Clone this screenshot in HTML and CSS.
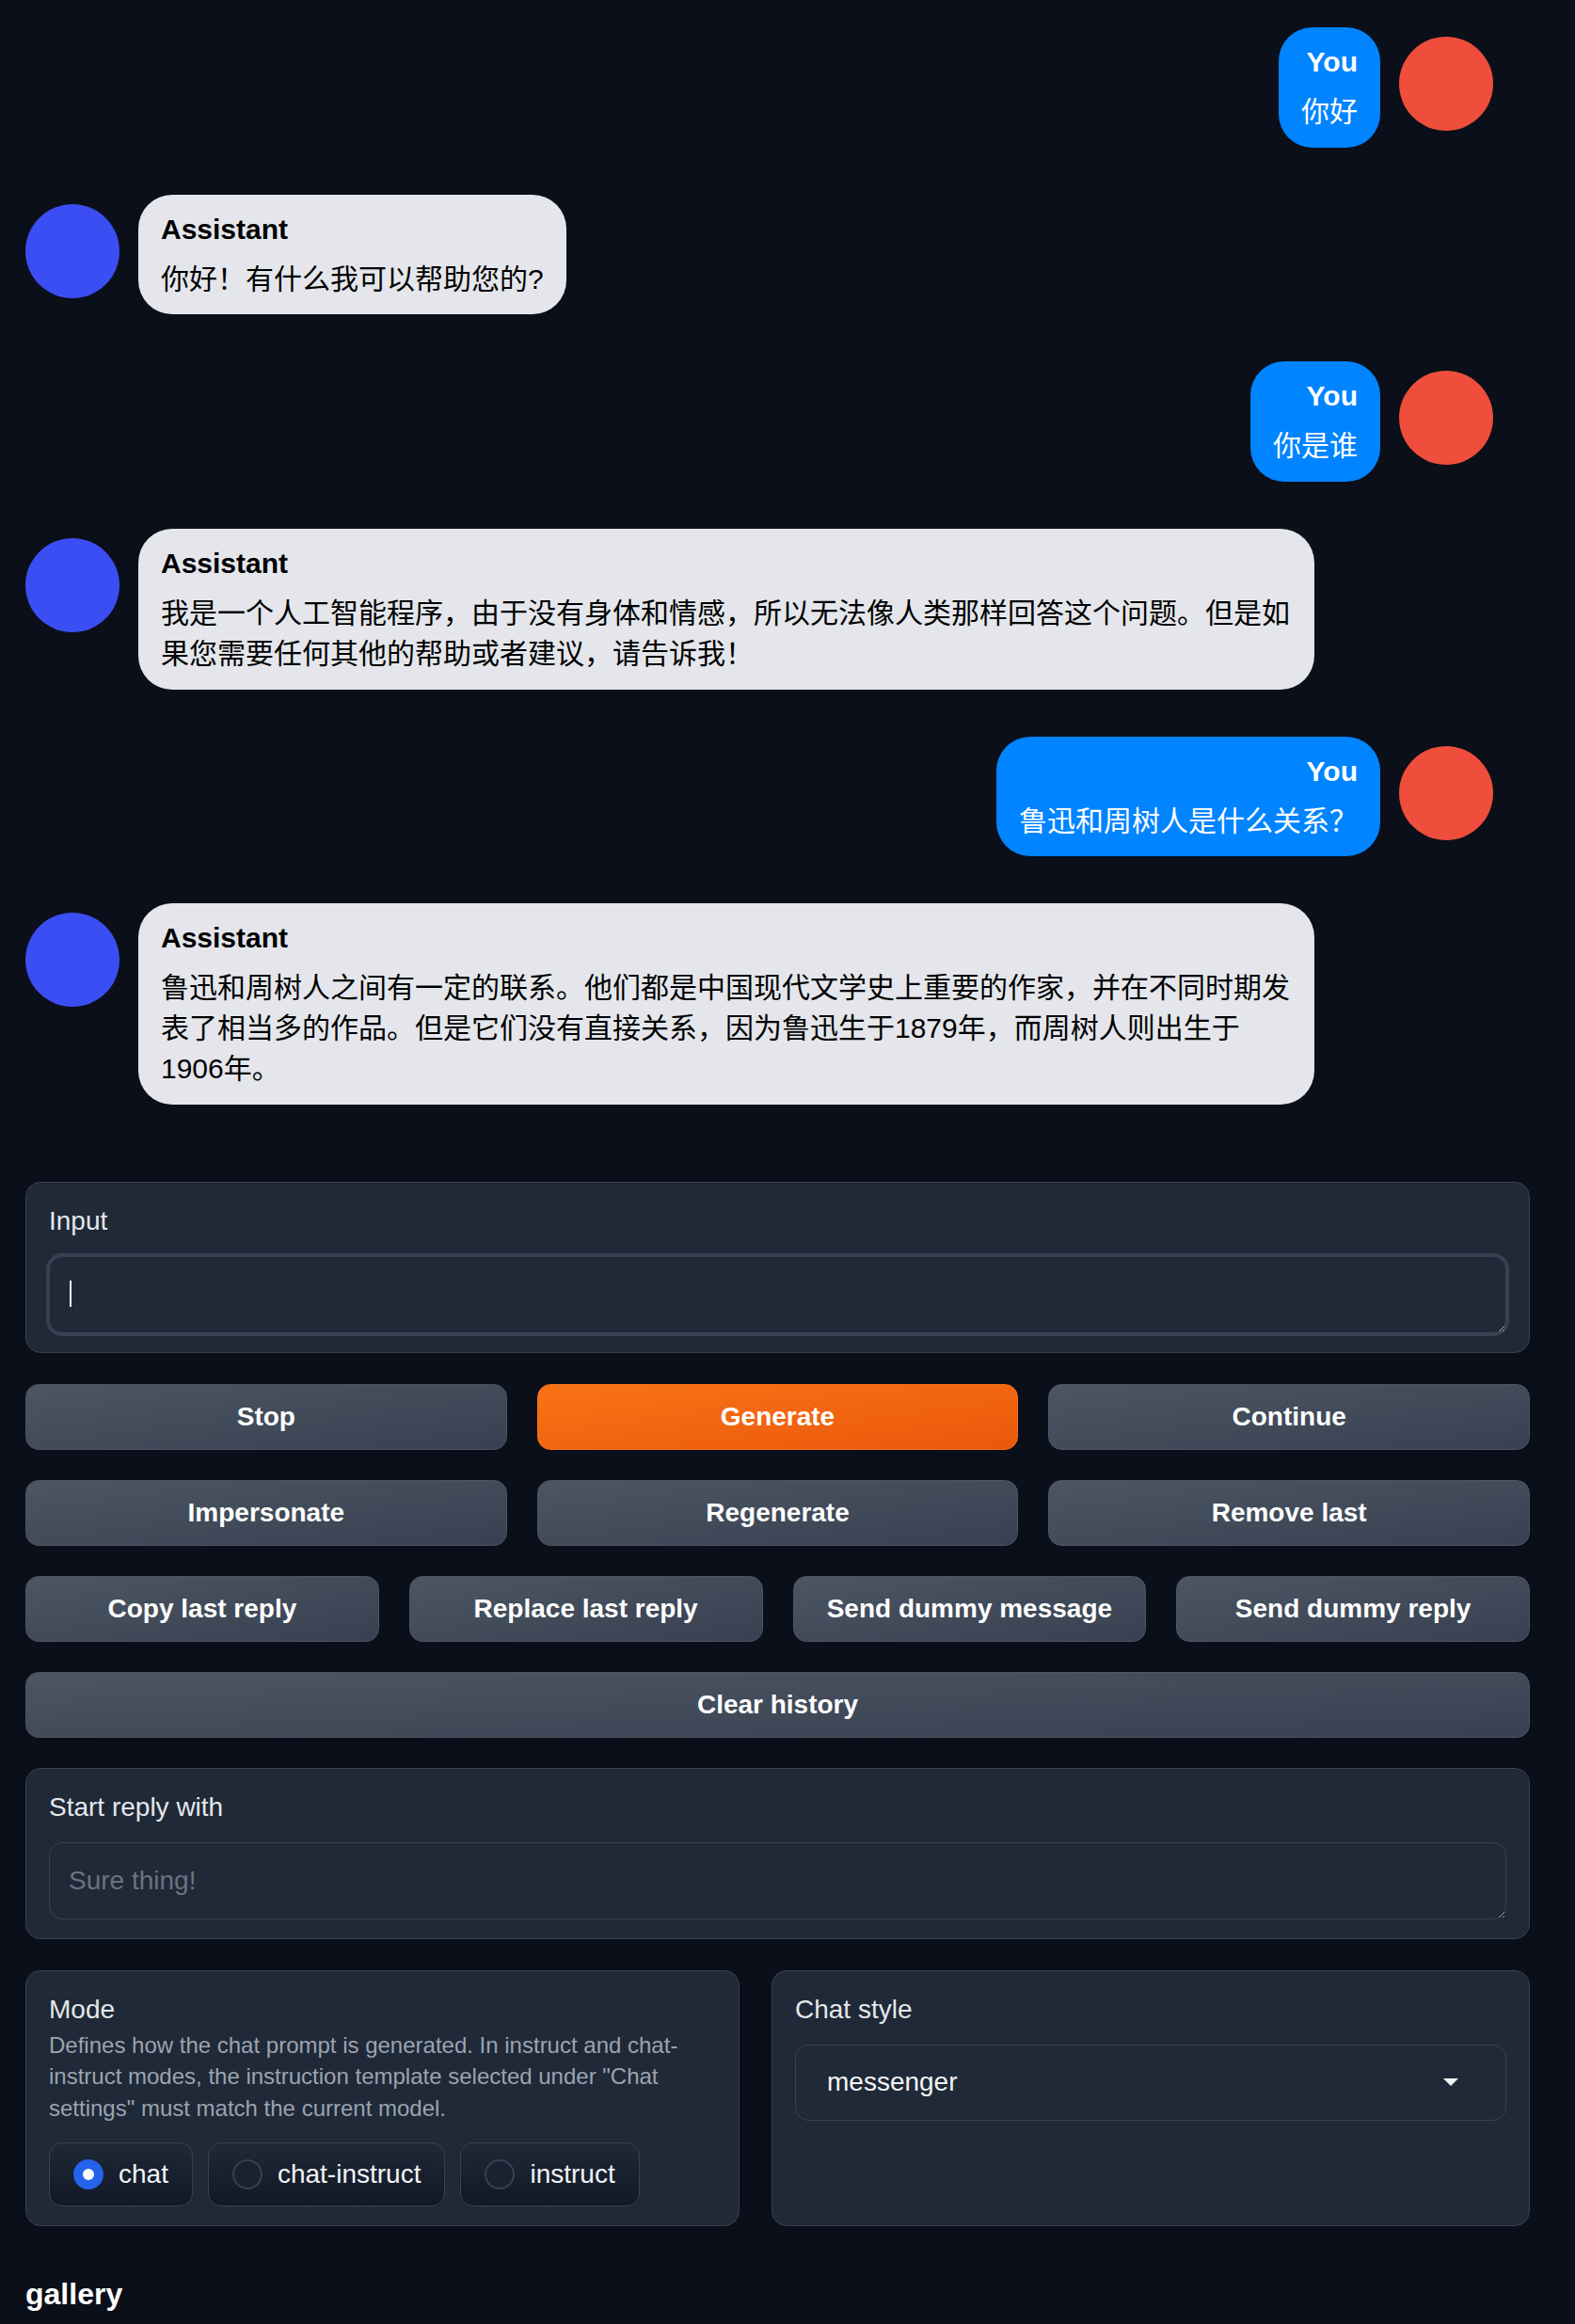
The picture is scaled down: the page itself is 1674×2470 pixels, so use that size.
FILE: index.html
```html
<!DOCTYPE html>
<html lang="zh-CN">
<head>
<meta charset="utf-8">
<title>Chat</title>
<link rel="stylesheet" href="styles.css">
</head>
<body>
<div class="page">
  <div class="chat">
    <div class="message you">
      <div class="circle circle-you"></div>
      <div class="text">
        <div class="username">You</div>
        <div class="message-body"><p>你好</p></div>
      </div>
    </div>
    <div class="message bot">
      <div class="circle circle-bot"></div>
      <div class="text">
        <div class="username">Assistant</div>
        <div class="message-body"><p>你好！有什么我可以帮助您的?</p></div>
      </div>
    </div>
    <div class="message you">
      <div class="circle circle-you"></div>
      <div class="text">
        <div class="username">You</div>
        <div class="message-body"><p>你是谁</p></div>
      </div>
    </div>
    <div class="message bot">
      <div class="circle circle-bot"></div>
      <div class="text">
        <div class="username">Assistant</div>
        <div class="message-body"><p>我是一个人工智能程序，由于没有身体和情感，所以无法像人类那样回答这个问题。但是如果您需要任何其他的帮助或者建议，请告诉我！</p></div>
      </div>
    </div>
    <div class="message you">
      <div class="circle circle-you"></div>
      <div class="text">
        <div class="username">You</div>
        <div class="message-body"><p>鲁迅和周树人是什么关系？</p></div>
      </div>
    </div>
    <div class="message bot">
      <div class="circle circle-bot"></div>
      <div class="text">
        <div class="username">Assistant</div>
        <div class="message-body"><p>鲁迅和周树人之间有一定的联系。他们都是中国现代文学史上重要的作家，并在不同时期发表了相当多的作品。但是它们没有直接关系，因为鲁迅生于1879年，而周树人则出生于1906年。</p></div>
      </div>
    </div>
  </div>

  <div class="block">
    <label class="label" for="chat-input">Input</label>
    <div class="input-wrap">
      <textarea id="chat-input" class="textarea focused"></textarea>
      <span class="caret"></span>
    </div>
  </div>

  <div class="buttons">
    <div class="btn-row cols-3">
      <button class="btn">Stop</button>
      <button class="btn primary">Generate</button>
      <button class="btn">Continue</button>
    </div>
    <div class="btn-row cols-3">
      <button class="btn">Impersonate</button>
      <button class="btn">Regenerate</button>
      <button class="btn">Remove last</button>
    </div>
    <div class="btn-row cols-4">
      <button class="btn">Copy last reply</button>
      <button class="btn">Replace last reply</button>
      <button class="btn">Send dummy message</button>
      <button class="btn">Send dummy reply</button>
    </div>
    <div class="btn-row cols-1">
      <button class="btn">Clear history</button>
    </div>
  </div>

  <div class="block">
    <label class="label" for="start-reply">Start reply with</label>
    <textarea id="start-reply" class="textarea" placeholder="Sure thing!"></textarea>
  </div>

  <div class="settings-row">
    <div class="block mode">
      <span class="label label-tight">Mode</span>
      <div class="info">Defines how the chat prompt is generated. In instruct and chat-instruct modes, the instruction template selected under "Chat settings" must match the current model.</div>
      <div class="radios">
        <label class="radio"><span class="dot on"></span><span>chat</span></label>
        <label class="radio"><span class="dot"></span><span>chat-instruct</span></label>
        <label class="radio"><span class="dot"></span><span>instruct</span></label>
      </div>
    </div>
    <div class="block chat-style">
      <span class="label">Chat style</span>
      <div class="dropdown">
        <span>messenger</span>
        <span class="arrow"></span>
      </div>
    </div>
  </div>

  <div class="gallery">gallery</div>
</div>
</body>
</html>
```

FILE: styles.css
```css
* {
  box-sizing: border-box;
}

html,
body {
  margin: 0;
  background: #0b0f19;
}

body {
  font-family: "Liberation Sans", "Noto Sans CJK SC", Arial, sans-serif;
  color: #e5e7eb;
}

.page {
  width: 1599px;
  margin-left: 27px;
  padding-top: 29px;
  display: flex;
  flex-direction: column;
  gap: 32px;
}

/* ---------- chat ---------- */
.chat {
  width: 1560px;
}

.message {
  display: flex;
  align-items: flex-start;
  gap: 20px;
  padding-bottom: 50px;
  font-size: 30px;
  line-height: 42.86px;
}

.message.you {
  flex-direction: row-reverse;
}

.circle {
  flex: none;
  width: 100px;
  height: 100px;
  border-radius: 50%;
  margin-top: 10px;
}

.circle-you {
  background: rgb(238, 78, 59);
}

.circle-bot {
  background: rgb(59, 78, 244);
}

.text {
  border-radius: 36px;
  padding: 16px 24px;
  max-width: calc(80% + 2px);
  word-break: break-word;
}

.you .text {
  background: rgb(0, 132, 255);
  color: #fff;
}

.bot .text {
  background: #e4e6eb;
  color: #000;
}

.username {
  font-weight: bold;
}

.you .username {
  text-align: right;
}

.message-body p {
  margin: 10px 0 0;
}

/* ---------- blocks ---------- */
.block {
  background: #1f2937;
  border: 1px solid #374151;
  border-radius: 16px;
  padding: 20px 24px;
}

.label {
  display: block;
  font-size: 28px;
  line-height: 42px;
  color: #e5e7eb;
  margin-bottom: 16px;
}

.label-tight {
  margin-bottom: 0;
}

.input-wrap {
  position: relative;
}

.textarea {
  display: block;
  width: 100%;
  height: 82px;
  margin: 0;
  background: #1f2937;
  border: 1px solid #374151;
  border-radius: 14px;
  padding: 20px;
  font-family: "Liberation Sans", "Noto Sans CJK SC", Arial, sans-serif;
  font-size: 28px;
  line-height: 40px;
  color: #f3f4f6;
  resize: vertical;
  outline: none;
  color-scheme: dark;
}

.textarea::placeholder {
  color: #6b7280;
}

.textarea.focused {
  box-shadow: 0 0 0 3px #374151;
}

.caret {
  position: absolute;
  left: 22px;
  top: 26px;
  width: 2px;
  height: 28px;
  background: #f3f4f6;
}

/* ---------- buttons ---------- */
.buttons {
  display: flex;
  flex-direction: column;
  gap: 32px;
  margin-top: 1px;
}

.btn-row {
  display: grid;
  gap: 32px;
}

.cols-3 {
  grid-template-columns: repeat(3, 1fr);
}

.cols-4 {
  grid-template-columns: repeat(4, 1fr);
}

.cols-1 {
  grid-template-columns: 1fr;
}

.btn {
  height: 70px;
  border-radius: 14px;
  border: 1px solid #4b5563;
  background: linear-gradient(to bottom right, #4b5563, #374151);
  color: #fff;
  font-family: "Liberation Sans", Arial, sans-serif;
  font-weight: bold;
  font-size: 28px;
  padding: 0;
}

.btn.primary {
  background: linear-gradient(to bottom right, #f97316, #ea580c);
  border-color: #f97316;
}

/* ---------- settings row ---------- */
.settings-row {
  display: flex;
  gap: 34px;
  margin-top: 1px;
}

.mode {
  flex: 0 0 759px;
}

.chat-style {
  flex: 1 1 auto;
}

.info {
  font-size: 24px;
  line-height: 33.6px;
  color: #9ca3af;
  margin-bottom: 19px;
}

.radios {
  display: flex;
  gap: 16px;
}

.radio {
  display: flex;
  align-items: center;
  gap: 16px;
  padding: 12px 25px;
  border: 1px solid #374151;
  border-radius: 14px;
  background: linear-gradient(to top, #111827, #1f2937);
  font-size: 28px;
  line-height: 42px;
  color: #f3f4f6;
}

.dot {
  position: relative;
  flex: none;
  width: 32px;
  height: 32px;
  border-radius: 50%;
  border: 2px solid #374151;
  background: #1a2130;
}

.dot.on {
  background: #2563eb;
  border-color: #2563eb;
}

.dot.on::after {
  content: "";
  position: absolute;
  left: 50%;
  top: 50%;
  width: 12px;
  height: 12px;
  margin: -6px 0 0 -6px;
  border-radius: 50%;
  background: #fff;
}

.dropdown {
  display: flex;
  align-items: center;
  justify-content: space-between;
  height: 81px;
  border: 1px solid #374151;
  border-radius: 14px;
  padding: 0 50px 0 33px;
  font-size: 28px;
  color: #f3f4f6;
}

.arrow {
  width: 0;
  height: 0;
  border-left: 8px solid transparent;
  border-right: 8px solid transparent;
  border-top: 8px solid #f3f4f6;
}

.gallery {
  font-weight: bold;
  font-size: 32px;
  line-height: 38px;
  color: #fff;
  margin-top: 21px;
}
```
